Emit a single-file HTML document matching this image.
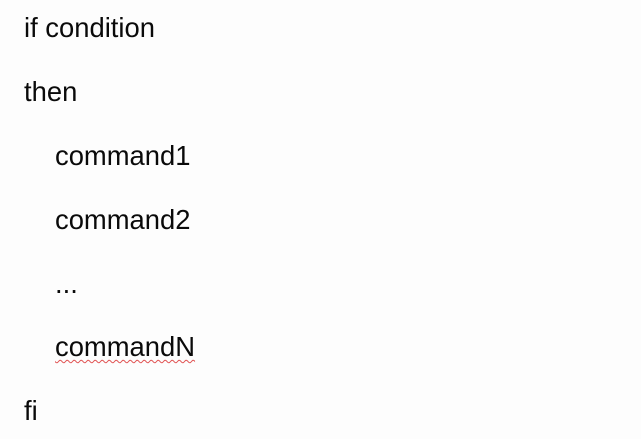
<!DOCTYPE html>
<html><head><meta charset="utf-8"><style>
html,body{margin:0;padding:0;background:#fdfdfd;width:641px;height:439px;overflow:hidden}
div.l{position:absolute;font-family:"Liberation Sans",Arial,sans-serif;font-size:27.4px;line-height:27px;color:#0a0a0a;white-space:nowrap}
.sq{text-decoration:underline wavy #e05050;text-decoration-thickness:1px;text-underline-offset:3px}
</style></head><body>
<div class="l" style="left:24px;top:14px">if condition</div>
<div class="l" style="left:24px;top:78px">then</div>
<div class="l" style="left:55px;top:142px">command1</div>
<div class="l" style="left:55px;top:206px">command2</div>
<div class="l" style="left:55px;top:270px">...</div>
<div class="l" style="left:55px;top:333px"><span class="sq">commandN</span></div>
<div class="l" style="left:24px;top:397px">fi</div>
</body></html>
